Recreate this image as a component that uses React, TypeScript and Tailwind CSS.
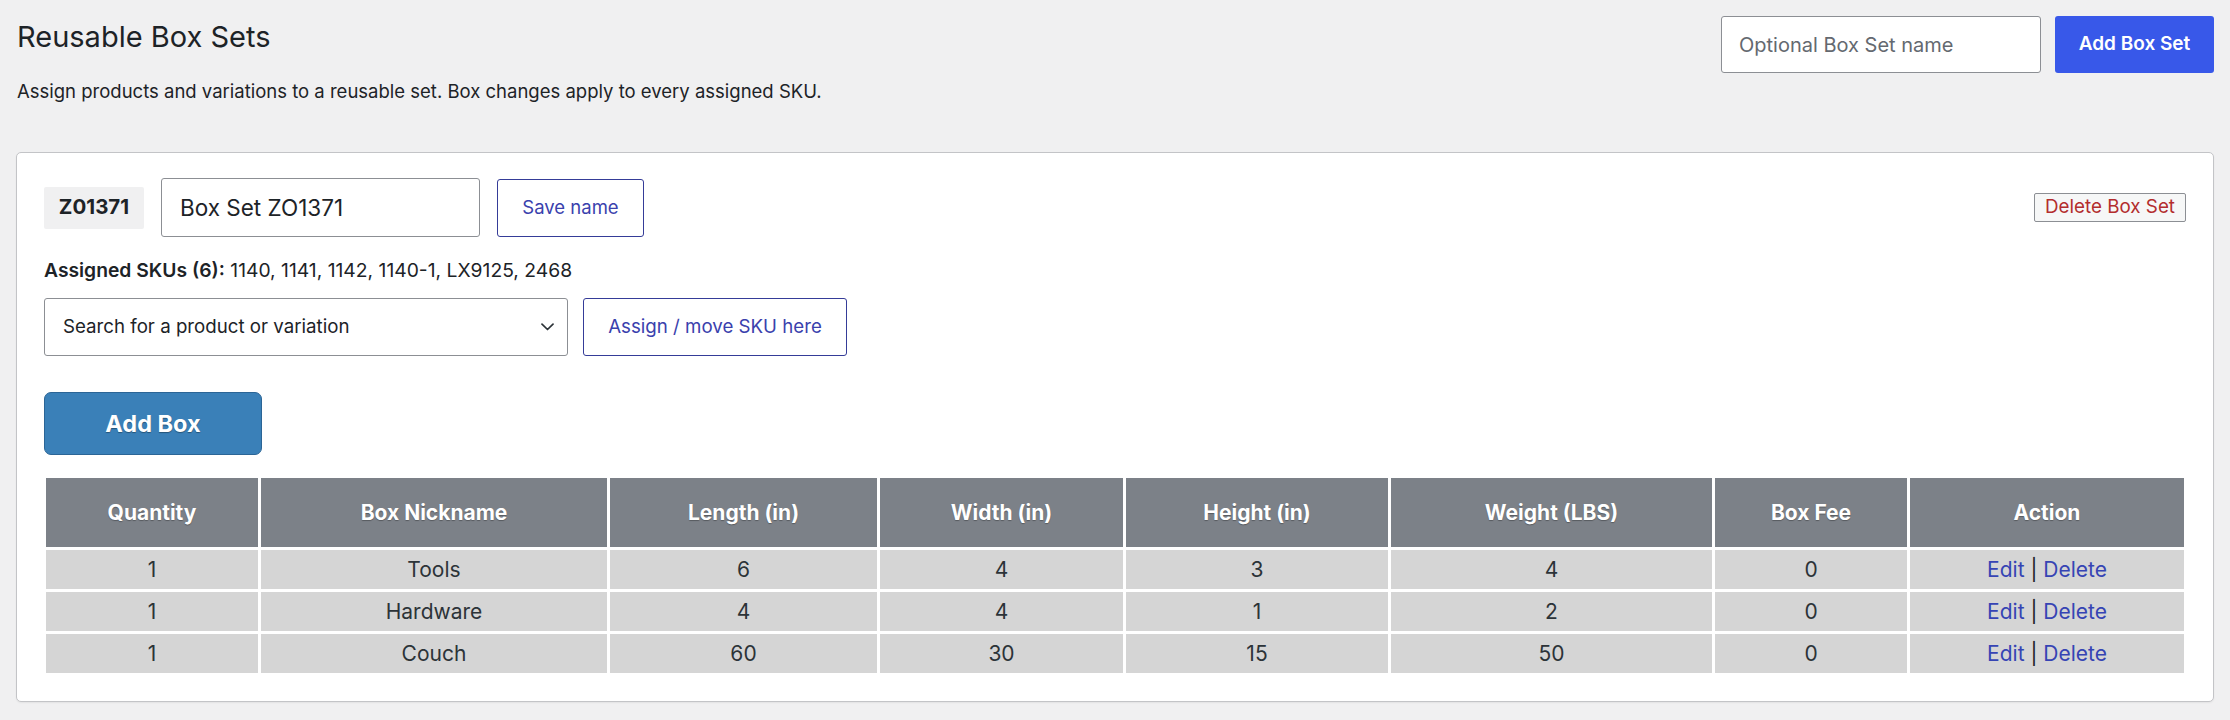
import React from "react"

const columns = [
  { label: "Quantity", w: "w-[212px]" },
  { label: "Box Nickname", w: "w-[346px]" },
  { label: "Length (in)", w: "w-[267px]" },
  { label: "Width (in)", w: "w-[243px]" },
  { label: "Height (in)", w: "w-[262px]" },
  { label: "Weight (LBS)", w: "w-[321px]" },
  { label: "Box Fee", w: "w-[192px]" },
  { label: "Action", w: "w-[274px]" },
]

const boxes = [
  { qty: 1, name: "Tools", length: 6, width: 4, height: 3, weight: 4, fee: 0 },
  { qty: 1, name: "Hardware", length: 4, width: 4, height: 1, weight: 2, fee: 0 },
  { qty: 1, name: "Couch", length: 60, width: 30, height: 15, weight: 50, fee: 0 },
]

function Chevron() {
  return (
    <svg width="13" height="8" viewBox="0 0 13 8" fill="none" className="absolute right-[14px] top-1/2 -translate-y-1/2 pointer-events-none">
      <path d="M1 1.2l5.5 5.3 5.5-5.3" stroke="#2c3338" strokeWidth="1.7" strokeLinecap="round" strokeLinejoin="round" />
    </svg>
  )
}

export default function App() {
  return (
    <div className="min-h-[720px] bg-[#f0f0f1] px-[16px] pt-[16px] font-['Inter',sans-serif] text-[#2c3338]">
      {/* Page header */}
      <div className="flex items-start justify-between">
        <div className="pl-[1px]">
          <h1 className="mt-[3px] text-[29px] leading-[36px] font-normal text-[#1d2327]">Reusable Box Sets</h1>
          <p className="mt-[23px] text-[18.5px] leading-[26px] text-[#1d2327]">
            Assign products and variations to a reusable set. Box changes apply to every assigned SKU.
          </p>
        </div>
        <div className="flex items-center gap-[14px]">
          <input
            type="text"
            placeholder="Optional Box Set name"
            className="w-[320px] h-[57px] border border-[#8c8f94] rounded-[3px] bg-white px-[17px] text-[20px] text-[#2c3338] placeholder:text-[#646970] outline-none"
          />
          <button className="w-[159px] h-[57px] rounded-[3px] bg-[#3858e9] text-white text-[19px] font-semibold">
            Add Box Set
          </button>
        </div>
      </div>

      {/* Box set card */}
      <div className="mt-[48px] bg-white border border-[#c3c4c7] rounded-[5px] shadow-[0_1px_2px_rgba(0,0,0,0.06)] px-[27px] pt-[25px] pb-[25px]">
        <div className="flex items-center">
          <span className="h-[42px] w-[100px] flex items-center justify-center bg-[#f0f0f1] rounded-[2px] text-[20.5px] font-bold text-[#1d2327]">
            Z01371
          </span>
          <input
            type="text"
            defaultValue="Box Set ZO1371"
            className="ml-[17px] w-[319px] h-[59px] border border-[#8c8f94] rounded-[3px] bg-white px-[18px] text-[22.5px] text-[#1d2327] outline-none"
          />
          <button className="ml-[17px] w-[147px] h-[58px] border border-[#353c98] rounded-[3px] bg-white text-[18.5px] text-[#3a41ad]">
            Save name
          </button>
          <button className="ml-auto w-[152px] h-[29px] border border-[#8c8f94] rounded-[2px] bg-[#f6f7f7] text-[18.8px] leading-none text-[#b32d2e]">
            Delete Box Set
          </button>
        </div>

        <p className="mt-[20px] text-[19.3px] leading-[26px] text-[#1d2327]">
          <span className="font-semibold">Assigned SKUs (6):</span> 1140, 1141, 1142, 1140-1, LX9125, 2468
        </p>

        <div className="mt-[15px] flex items-center gap-[15px]">
          <div className="relative">
            <select className="appearance-none w-[524px] h-[58px] border border-[#8c8f94] rounded-[3px] bg-white pl-[18px] pr-[40px] text-[18.7px] text-[#1d2327] outline-none">
              <option>Search for a product or variation</option>
            </select>
            <Chevron />
          </div>
          <button className="w-[264px] h-[58px] border border-[#353c98] rounded-[3px] bg-white text-[18.7px] text-[#3a41ad]">
            Assign / move SKU here
          </button>
        </div>

        <button className="mt-[36px] w-[218px] h-[63px] rounded-[7px] border border-[#2b6596] bg-[#3a80b8] text-white text-[23.5px] font-bold [text-shadow:0_1px_1px_rgba(0,0,0,0.35)]">
          Add Box
        </button>

        <table className="mt-[20px] ml-[-1px] w-[2144px] table-fixed border-separate border-spacing-[3px]">
          <thead>
            <tr>
              {columns.map((c) => (
                <th
                  key={c.label}
                  className={`${c.w} h-[69px] p-0 bg-[#7c8188] text-white text-[21px] font-bold text-center [text-shadow:0_1px_1px_rgba(0,0,0,0.3)]`}
                >
                  {c.label}
                </th>
              ))}
            </tr>
          </thead>
          <tbody>
            {boxes.map((b) => (
              <tr key={b.name} className="text-[21px] text-[#2c3338] text-center">
                <td className="h-[39px] p-0 bg-[#d5d5d5]">{b.qty}</td>
                <td className="h-[39px] p-0 bg-[#d5d5d5]">{b.name}</td>
                <td className="h-[39px] p-0 bg-[#d5d5d5]">{b.length}</td>
                <td className="h-[39px] p-0 bg-[#d5d5d5]">{b.width}</td>
                <td className="h-[39px] p-0 bg-[#d5d5d5]">{b.height}</td>
                <td className="h-[39px] p-0 bg-[#d5d5d5]">{b.weight}</td>
                <td className="h-[39px] p-0 bg-[#d5d5d5]">{b.fee}</td>
                <td className="h-[39px] p-0 bg-[#d5d5d5]">
                  <a className="text-[#3644b4] cursor-pointer">Edit</a>
                  <span className="text-[#1d2327]"> | </span>
                  <a className="text-[#3644b4] cursor-pointer">Delete</a>
                </td>
              </tr>
            ))}
          </tbody>
        </table>
      </div>
    </div>
  )
}
